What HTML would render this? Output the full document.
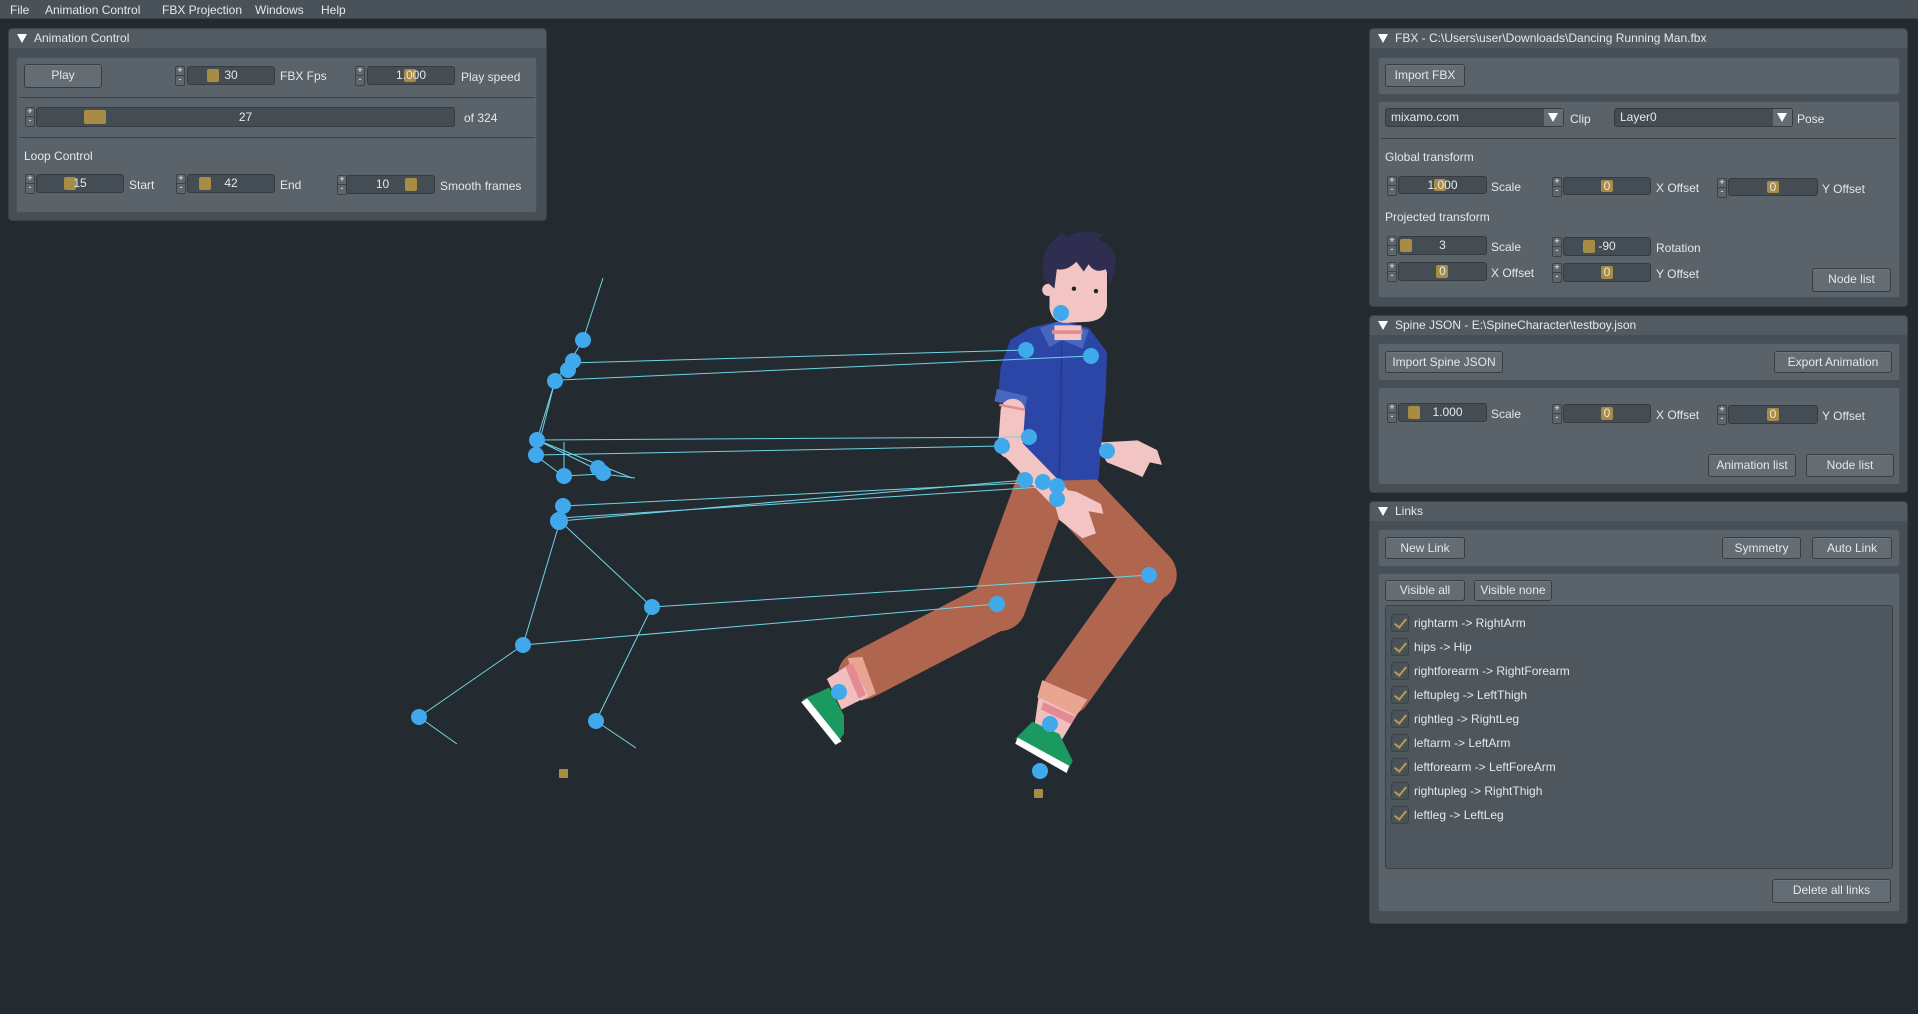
<!DOCTYPE html>
<html><head><meta charset="utf-8"><style>
*{box-sizing:border-box;margin:0;padding:0}
body{width:1918px;height:1014px;background:#242b30;position:relative;overflow:hidden;font-family:"Liberation Sans","DejaVu Sans",sans-serif;font-size:12px;color:#e6e8ea}
.a{position:absolute}
.menu{left:0;top:0;width:1918px;height:19px;background:#4a5259;border-bottom:1px solid #3a4146}
.menu span{position:absolute;top:3px;font-size:12px}
.win{background:#474f56;border:1px solid #3b4248;border-radius:4px}
.tb{left:0;top:0;right:0;height:19px;background:#535b62;border-radius:4px 4px 0 0}
.tb .tri{position:absolute;left:8px;top:5px;width:0;height:0;border-left:5px solid transparent;border-right:5px solid transparent;border-top:9px solid #fff}
.tb .t{position:absolute;left:25px;top:2px;white-space:nowrap}
.box{background:#5a626a;border:1px solid #4b535a;border-radius:3px}
.btn{background:#646c74;border:1px solid #373d42;border-radius:3px;text-align:center;line-height:21px;white-space:nowrap;box-shadow:inset 0 1px 0 #6f777e}
.fld{background:#454d54;border:1px solid #353b40;border-radius:3px;text-align:center;line-height:19px;white-space:nowrap}
.knob{position:absolute;top:2px;bottom:2px;width:12px;background:#a98c44;border-radius:2px}
.fld .v{position:relative}
.pm{width:8px;height:18px}
.pm::before,.pm::after{position:absolute;left:0;width:8px;height:9px;border:1px solid #3b4248;border-radius:2px;background:#5f676e;font-size:9px;line-height:7px;text-align:center;color:#fff}
.pm::before{content:"+";top:0}
.pm::after{content:"-";top:9px}
.lbl{white-space:nowrap}
.sep{height:1px;background:#3a4147}
.cb{width:18px;height:18px;background:#4a5259;border:1px solid #3a4147;border-radius:3px}
</style></head><body>
<div class="a menu"><span style="left:10px">File</span><span style="left:45px">Animation Control</span><span style="left:162px">FBX Projection</span><span style="left:255px">Windows</span><span style="left:321px">Help</span></div>

<svg class="a" style="left:0;top:0" width="1918" height="1014" viewBox="0 0 1918 1014">
<g transform="scale(1.2232)">
 <line x1="872" y1="398" x2="940" y2="470" stroke="#b0654f" stroke-width="44" stroke-linecap="round"/>
 <line x1="940" y1="470" x2="872" y2="565" stroke="#b0654f" stroke-width="40" stroke-linecap="round"/>
 <polygon points="852,556 889,572 880,585 848,570" fill="#e8a592"/>
 <polygon points="849,570 880,585 868,605 845,598" fill="#f0bfbe"/>
 <polygon points="853,574 879,586 876,592 851,580" fill="#e38a92"/>
 <polygon points="844,590 866,600 877,622 872,632 830,604" fill="#1a9a5f"/>
 <polygon points="832,603 874,626 872,632 830,608" fill="#fff"/>
 <line x1="852" y1="398" x2="817" y2="494" stroke="#b0654f" stroke-width="44" stroke-linecap="round"/>
 <line x1="817" y1="494" x2="705" y2="552" stroke="#b0654f" stroke-width="40" stroke-linecap="round"/>
 <polygon points="693,538 705,537 716,567 704,573" fill="#e8a592"/>
 <polygon points="676,555 696,542 710,569 688,580" fill="#f0bfbe"/>
 <polygon points="691,545 697,542 708,568 702,571" fill="#e38a92"/>
 <polygon points="656,572 678,562 690,585 690,600 684,608" fill="#1a9a5f"/>
 <polygon points="655,574 660,571 688,606 683,609" fill="#fff"/>
 <polygon points="895,362 930,360 946,368 950,380 940,378 934,390 925,386 905,378" fill="#f2c4c4"/>
 <polygon points="826,278 842,268 868,262 890,268 905,288 904,320 898,392 860,393 838,386 832,340 816,326 818,300" fill="#2c46a8"/>
 <polygon points="850,268 868,262 890,270 885,285 868,278 858,284" fill="#4766bd"/>
 <line x1="868" y1="282" x2="866" y2="392" stroke="#21378a" stroke-width="1"/>
 <polygon points="815,318 840,324 838,334 813,328" fill="#4766bd"/>
 <line x1="828" y1="336" x2="826" y2="365" stroke="#f2c4c4" stroke-width="20" stroke-linecap="round"/>
 <line x1="826" y1="365" x2="865" y2="405" stroke="#f2c4c4" stroke-width="18" stroke-linecap="round"/>
 <polygon points="858,398 880,402 900,412 902,420 890,418 896,436 885,440 866,425" fill="#f2c4c4"/>
 <line x1="817" y1="331" x2="838" y2="335" stroke="#e38a92" stroke-width="2"/>
 <rect x="862" y="266" width="22" height="12" fill="#f2c4c4"/>
 <rect x="860" y="270" width="25" height="3" fill="#e38a92"/>
 <path d="M858 214 L905 214 L905 250 Q903 262 890 263 L872 264 Q860 264 858 252 Z" fill="#f2c4c4"/>
 <circle cx="857" cy="237" r="5" fill="#f2c4c4"/>
 <path d="M853 228 Q850 205 862 196 L868 190 L872 194 Q885 186 902 192 L898 196 Q914 202 912 218 L908 232 L904 220 Q895 224 890 216 L886 222 L880 214 Q872 222 864 220 L862 236 Z" fill="#2f2e50"/>
 <circle cx="878" cy="236" r="1.8" fill="#222"/><circle cx="896" cy="238" r="1.8" fill="#222"/>
</g>
<g stroke="#6fd4e6" stroke-width="1" fill="none">
 <polyline points="603,278 583,340 569,363 555,381 537,440 535,455 563,476 603,474 635,478"/>
 <line x1="555" y1="381" x2="536" y2="455"/>
 <line x1="537" y1="440" x2="598" y2="470"/>
 <line x1="537" y1="440" x2="632" y2="478"/>
 <line x1="564" y1="442" x2="564" y2="476"/>
 <polyline points="560,521 523,645 419,717 457,744"/>
 <polyline points="560,521 652,607 596,721 636,748"/>
 <line x1="563" y1="506" x2="560" y2="521"/>
 <line x1="569" y1="363" x2="1026" y2="350"/>
 <line x1="560" y1="380" x2="1091" y2="356"/>
 <line x1="537" y1="440" x2="1029" y2="437"/>
 <line x1="536" y1="455" x2="1002" y2="446"/>
 <line x1="563" y1="506" x2="1043" y2="482"/>
 <line x1="560" y1="521" x2="1025" y2="480"/>
 <line x1="560" y1="518" x2="1057" y2="486"/>
 <line x1="652" y1="607" x2="1149" y2="575"/>
 <line x1="523" y1="645" x2="997" y2="604"/>
</g>
<g fill="#3fa9ec">
 <circle cx="583" cy="340" r="8"/><circle cx="573" cy="361" r="8"/><circle cx="568" cy="370" r="8"/><circle cx="555" cy="381" r="8"/>
 <circle cx="537" cy="440" r="8"/><circle cx="536" cy="455" r="8"/><circle cx="564" cy="476" r="8"/><circle cx="598" cy="468" r="8"/><circle cx="603" cy="473" r="8"/>
 <circle cx="563" cy="506" r="8"/><circle cx="559" cy="521" r="9"/><circle cx="652" cy="607" r="8"/><circle cx="523" cy="645" r="8"/>
 <circle cx="419" cy="717" r="8"/><circle cx="596" cy="721" r="8"/>
 <circle cx="1061" cy="313" r="8"/><circle cx="1026" cy="350" r="8"/><circle cx="1091" cy="356" r="8"/>
 <circle cx="1029" cy="437" r="8"/><circle cx="1002" cy="446" r="8"/><circle cx="1107" cy="451" r="8"/>
 <circle cx="1025" cy="480" r="8"/><circle cx="1043" cy="482" r="8"/><circle cx="1057" cy="486" r="8"/><circle cx="1057" cy="499" r="8"/>
 <circle cx="1149" cy="575" r="8"/><circle cx="997" cy="604" r="8"/><circle cx="839" cy="692" r="8"/><circle cx="1050" cy="724" r="8"/><circle cx="1040" cy="771" r="8"/>
</g>
<rect x="559" y="769" width="9" height="9" rx="1" fill="#a98c44"/>
<rect x="1034" y="789" width="9" height="9" rx="1" fill="#a98c44"/>
</svg>

<div class="a win" style="left:8px;top:28px;width:539px;height:193px">
 <div class="a tb"><div class="tri"></div><div class="t">Animation Control</div></div>
</div>
<div class="a box" style="left:16px;top:57px;width:521px;height:156px"></div>
<div class="a btn" style="left:24px;top:64px;width:78px;height:24px">Play</div>
<div class="a pm" style="left:175px;top:66px"></div>
<div class="a fld" style="left:187px;top:66px;width:88px;height:19px;line-height:17px"><div class="knob" style="left:19px"></div><span class="v">30</span></div>
<div class="a lbl" style="left:280px;top:69px">FBX Fps</div>
<div class="a pm" style="left:355px;top:66px"></div>
<div class="a fld" style="left:367px;top:66px;width:88px;height:19px;line-height:17px"><div class="knob" style="left:36px"></div><span class="v">1.000</span></div>
<div class="a lbl" style="left:461px;top:70px">Play speed</div>
<div class="a sep" style="left:19px;top:97px;width:516px"></div>
<div class="a pm" style="left:25px;top:107px"></div>
<div class="a fld" style="left:36px;top:107px;width:419px;height:20px;line-height:18px"><div class="knob" style="left:47px;width:22px"></div><span class="v">27</span></div>
<div class="a lbl" style="left:464px;top:111px">of 324</div>
<div class="a sep" style="left:19px;top:137px;width:516px"></div>
<div class="a lbl" style="left:24px;top:149px">Loop Control</div>
<div class="a pm" style="left:25px;top:174px"></div>
<div class="a fld" style="left:36px;top:174px;width:88px;height:19px;line-height:17px"><div class="knob" style="left:27px"></div><span class="v">15</span></div>
<div class="a lbl" style="left:129px;top:178px">Start</div>
<div class="a pm" style="left:176px;top:174px"></div>
<div class="a fld" style="left:187px;top:174px;width:88px;height:19px;line-height:17px"><div class="knob" style="left:11px"></div><span class="v">42</span></div>
<div class="a lbl" style="left:280px;top:178px">End</div>
<div class="a pm" style="left:337px;top:175px"></div>
<div class="a fld" style="left:346px;top:175px;width:89px;height:19px;line-height:17px"><div class="knob" style="left:58px"></div><span class="v" style="margin-left:-16px">10</span></div>
<div class="a lbl" style="left:440px;top:179px">Smooth frames</div>

<div class="a win" style="left:1369px;top:28px;width:539px;height:279px">
 <div class="a tb"><div class="tri"></div><div class="t">FBX - C:\Users\user\Downloads\Dancing Running Man.fbx</div></div>
</div>
<div class="a box" style="left:1378px;top:57px;width:522px;height:38px"></div>
<div class="a btn" style="left:1385px;top:64px;width:80px;height:23px">Import FBX</div>
<div class="a box" style="left:1378px;top:101px;width:522px;height:197px"></div>
<div class="a fld" style="left:1385px;top:108px;width:179px;height:19px;line-height:17px;text-align:left;padding-left:5px">mixamo.com<div class="a" style="right:0;top:0;width:19px;height:17px;background:#646c74"><div class="a" style="left:4px;top:4px;border-left:5px solid transparent;border-right:5px solid transparent;border-top:9px solid #fff"></div></div></div>
<div class="a lbl" style="left:1570px;top:112px">Clip</div>
<div class="a fld" style="left:1614px;top:108px;width:179px;height:19px;line-height:17px;text-align:left;padding-left:5px">Layer0<div class="a" style="right:0;top:0;width:19px;height:17px;background:#646c74"><div class="a" style="left:4px;top:4px;border-left:5px solid transparent;border-right:5px solid transparent;border-top:9px solid #fff"></div></div></div>
<div class="a lbl" style="left:1797px;top:112px">Pose</div>
<div class="a sep" style="left:1381px;top:138px;width:516px"></div>
<div class="a lbl" style="left:1385px;top:150px">Global transform</div>
<div class="a pm" style="left:1387px;top:176px"></div>
<div class="a fld" style="left:1398px;top:176px;width:89px;height:18px;line-height:16px"><div class="knob" style="left:35px"></div><span class="v">1.000</span></div>
<div class="a lbl" style="left:1491px;top:180px">Scale</div>
<div class="a pm" style="left:1552px;top:177px"></div>
<div class="a fld" style="left:1563px;top:177px;width:88px;height:18px;line-height:16px"><div class="knob" style="left:37px"></div><span class="v">0</span></div>
<div class="a lbl" style="left:1656px;top:181px">X Offset</div>
<div class="a pm" style="left:1717px;top:178px"></div>
<div class="a fld" style="left:1728px;top:178px;width:90px;height:18px;line-height:16px"><div class="knob" style="left:38px"></div><span class="v">0</span></div>
<div class="a lbl" style="left:1822px;top:182px">Y Offset</div>
<div class="a lbl" style="left:1385px;top:210px">Projected transform</div>
<div class="a pm" style="left:1387px;top:236px"></div>
<div class="a fld" style="left:1398px;top:236px;width:89px;height:19px;line-height:17px"><div class="knob" style="left:1px"></div><span class="v">3</span></div>
<div class="a lbl" style="left:1491px;top:240px">Scale</div>
<div class="a pm" style="left:1552px;top:237px"></div>
<div class="a fld" style="left:1563px;top:237px;width:88px;height:19px;line-height:17px"><div class="knob" style="left:19px"></div><span class="v">-90</span></div>
<div class="a lbl" style="left:1656px;top:241px">Rotation</div>
<div class="a pm" style="left:1387px;top:262px"></div>
<div class="a fld" style="left:1398px;top:262px;width:89px;height:19px;line-height:17px"><div class="knob" style="left:37px"></div><span class="v">0</span></div>
<div class="a lbl" style="left:1491px;top:266px">X Offset</div>
<div class="a pm" style="left:1552px;top:263px"></div>
<div class="a fld" style="left:1563px;top:263px;width:88px;height:19px;line-height:17px"><div class="knob" style="left:37px"></div><span class="v">0</span></div>
<div class="a lbl" style="left:1656px;top:267px">Y Offset</div>
<div class="a btn" style="left:1812px;top:268px;width:79px;height:24px">Node list</div>

<div class="a win" style="left:1369px;top:315px;width:539px;height:178px">
 <div class="a tb"><div class="tri"></div><div class="t">Spine JSON - E:\SpineCharacter\testboy.json</div></div>
</div>
<div class="a box" style="left:1378px;top:343px;width:522px;height:38px"></div>
<div class="a btn" style="left:1385px;top:351px;width:118px;height:22px">Import Spine JSON</div>
<div class="a btn" style="left:1774px;top:351px;width:118px;height:22px">Export Animation</div>
<div class="a box" style="left:1378px;top:387px;width:522px;height:98px"></div>
<div class="a pm" style="left:1387px;top:403px"></div>
<div class="a fld" style="left:1398px;top:403px;width:89px;height:19px;line-height:17px"><div class="knob" style="left:9px"></div><span class="v" style="margin-left:10px">1.000</span></div>
<div class="a lbl" style="left:1491px;top:407px">Scale</div>
<div class="a pm" style="left:1552px;top:404px"></div>
<div class="a fld" style="left:1563px;top:404px;width:88px;height:19px;line-height:17px"><div class="knob" style="left:37px"></div><span class="v">0</span></div>
<div class="a lbl" style="left:1656px;top:408px">X Offset</div>
<div class="a pm" style="left:1717px;top:405px"></div>
<div class="a fld" style="left:1728px;top:405px;width:90px;height:19px;line-height:17px"><div class="knob" style="left:38px"></div><span class="v">0</span></div>
<div class="a lbl" style="left:1822px;top:409px">Y Offset</div>
<div class="a btn" style="left:1708px;top:454px;width:88px;height:23px">Animation list</div>
<div class="a btn" style="left:1806px;top:454px;width:88px;height:23px">Node list</div>

<div class="a win" style="left:1369px;top:501px;width:539px;height:423px">
 <div class="a tb"><div class="tri"></div><div class="t">Links</div></div>
</div>
<div class="a box" style="left:1378px;top:529px;width:522px;height:38px"></div>
<div class="a btn" style="left:1385px;top:537px;width:80px;height:22px">New Link</div>
<div class="a btn" style="left:1722px;top:537px;width:79px;height:22px">Symmetry</div>
<div class="a btn" style="left:1812px;top:537px;width:80px;height:22px">Auto Link</div>
<div class="a box" style="left:1378px;top:573px;width:522px;height:339px"></div>
<div class="a btn" style="left:1385px;top:580px;width:80px;height:21px;line-height:19px">Visible all</div>
<div class="a btn" style="left:1474px;top:580px;width:78px;height:21px;line-height:19px">Visible none</div>
<div class="a" style="left:1385px;top:605px;width:508px;height:264px;background:#4f575e;border:1px solid #3a4147;border-radius:3px"></div>
<div class="a" style="left:1391px;top:614px">
<style>.row{position:relative;height:24px}.row .cb{position:absolute;left:0;top:0}.row .cb::after{content:"";position:absolute;left:5px;top:1px;width:5px;height:10px;border-right:2px solid #b99a55;border-bottom:2px solid #b99a55;transform:rotate(40deg)}.row span{position:absolute;left:23px;top:2px;white-space:nowrap}</style>
<div class="row"><div class="cb"></div><span>rightarm -&gt; RightArm</span></div>
<div class="row"><div class="cb"></div><span>hips -&gt; Hip</span></div>
<div class="row"><div class="cb"></div><span>rightforearm -&gt; RightForearm</span></div>
<div class="row"><div class="cb"></div><span>leftupleg -&gt; LeftThigh</span></div>
<div class="row"><div class="cb"></div><span>rightleg -&gt; RightLeg</span></div>
<div class="row"><div class="cb"></div><span>leftarm -&gt; LeftArm</span></div>
<div class="row"><div class="cb"></div><span>leftforearm -&gt; LeftForeArm</span></div>
<div class="row"><div class="cb"></div><span>rightupleg -&gt; RightThigh</span></div>
<div class="row"><div class="cb"></div><span>leftleg -&gt; LeftLeg</span></div>
</div>
<div class="a btn" style="left:1772px;top:879px;width:119px;height:24px">Delete all links</div>
</body></html>
